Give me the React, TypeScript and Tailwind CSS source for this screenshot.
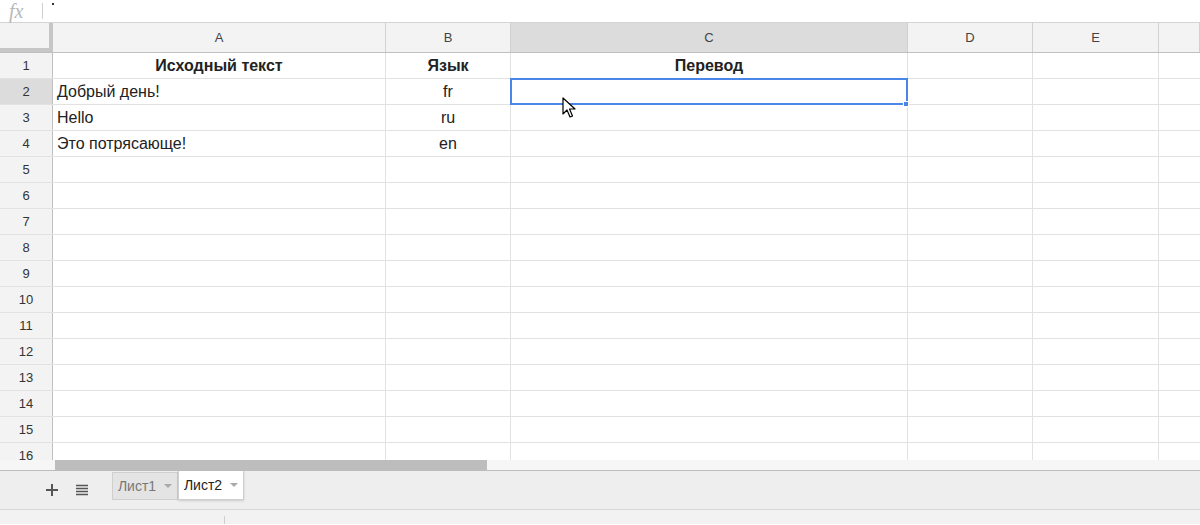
import React from "react";

const cols = [
  { name: "A", w: "w-[333px]" },
  { name: "B", w: "w-[125px]" },
  { name: "C", w: "w-[397px]" },
  { name: "D", w: "w-[125px]" },
  { name: "E", w: "w-[126px]" },
  { name: "", w: "flex-1" },
];

const data: Record<number, { a?: string; b?: string; c?: string; bold?: boolean }> = {
  1: { a: "Исходный текст", b: "Язык", c: "Перевод", bold: true },
  2: { a: "Добрый день!", b: "fr" },
  3: { a: "Hello", b: "ru" },
  4: { a: "Это потрясающе!", b: "en" },
};

const rows = Array.from({ length: 16 }, (_, i) => i + 1);

function Cursor() {
  return (
    <svg width="14" height="22" viewBox="0 0 14 22" className="absolute left-[562px] top-[97px]">
      <path
        d="M1 1 L1 17 L5 13 L8 20 L10.5 19 L7.5 12 L13 12 Z"
        fill="#fff"
        stroke="#000"
        strokeWidth="1.2"
        strokeLinejoin="round"
      />
    </svg>
  );
}

export default function App() {
  return (
    <div className="relative w-[1200px] h-[525px] overflow-hidden bg-white font-['Liberation_Sans',Arial,sans-serif] text-[#222]">
      {/* Formula bar */}
      <div className="flex items-center h-[23px] border-b border-[#d4d4d4] bg-white">
        <span className="w-[42px] pl-[9px] font-['Liberation_Serif',serif] italic text-[20px] text-[#b8b8b8] leading-[22px]">
          fx
        </span>
        <span className="w-px h-[16px] bg-[#d0d0d0]" />
        <span className="ml-[9px] -mt-[14px] w-[2px] h-[2px] bg-[#333]" />
      </div>

      {/* Column headers */}
      <div className="flex h-[30px] border-b border-[#c0c0c0] bg-[#f3f3f3]">
        <div className="w-[53px] shrink-0 border-r-4 border-b-4 border-[#c6c6c6] bg-[#f3f3f3]" />
        {cols.map((c, i) => (
          <div
            key={i}
            className={`${c.w} shrink-0 flex items-center justify-center border-r border-[#d0d0d0] text-[13px] text-[#444] ${
              c.name === "C" ? "bg-[#dcdcdc]" : ""
            }`}
          >
            {c.name}
          </div>
        ))}
      </div>

      {/* Grid */}
      <div className="h-[407px] overflow-hidden">
        {rows.map((r) => {
          const d = data[r] || {};
          return (
            <div key={r} className="flex h-[26px] border-b border-[#e2e2e2]">
              <div
                className={`w-[53px] shrink-0 flex items-center justify-center border-r border-[#c0c0c0] text-[13px] text-[#333] ${
                  r === 2 ? "bg-[#dcdcdc]" : "bg-[#f3f3f3]"
                }`}
              >
                {r}
              </div>
              <div
                className={`w-[333px] shrink-0 flex items-center border-r border-[#e2e2e2] text-[16px] ${
                  d.bold ? "justify-center font-bold" : "pl-[4px]"
                }`}
              >
                {d.a}
              </div>
              <div
                className={`w-[125px] shrink-0 flex items-center justify-center border-r border-[#e2e2e2] text-[16px] ${
                  d.bold ? "font-bold" : ""
                }`}
              >
                {d.b}
              </div>
              <div className="w-[397px] shrink-0 flex items-center justify-center border-r border-[#e2e2e2] text-[16px] font-bold">
                {d.c}
              </div>
              <div className="w-[125px] shrink-0 border-r border-[#e2e2e2]" />
              <div className="w-[126px] shrink-0 border-r border-[#e2e2e2]" />
              <div className="flex-1" />
            </div>
          );
        })}
      </div>

      {/* Horizontal scrollbar */}
      <div className="flex items-center h-[11px] bg-[#f6f6f6] pl-[55px] border-b border-[#bdbdbd]">
        <div className="w-[432px] h-[10px] bg-[#bdbdbd]" />
      </div>

      {/* Sheet tabs */}
      <div className="flex items-start h-[39px] bg-[#eeeeee] border-b border-[#d6d6d6]">
        <div className="w-[112px] h-full flex items-center pl-[45px] gap-[16px] text-[#555]">
          <svg width="14" height="14" viewBox="0 0 14 14">
            <path d="M7 1 V13 M1 7 H13" stroke="#555" strokeWidth="2" />
          </svg>
          <svg width="14" height="12" viewBox="0 0 14 12">
            <path d="M1 1.5 H13 M1 4.5 H13 M1 7.5 H13 M1 10.5 H13" stroke="#555" strokeWidth="1.6" />
          </svg>
        </div>
        <div className="mt-[1px] h-[28px] w-[66px] flex items-center justify-center gap-[8px] bg-[#e4e4e4] border border-[#cfcfcf] text-[14px] text-[#777]">
          Лист1
          <span className="w-0 h-0 border-l-[4px] border-r-[4px] border-t-[4px] border-l-transparent border-r-transparent border-t-[#aaa]" />
        </div>
        <div className="h-[29px] w-[66px] flex items-center justify-center gap-[8px] bg-white border border-t-0 border-[#cfcfcf] shadow-[0_1px_2px_rgba(0,0,0,0.15)] text-[14px] text-[#222]">
          Лист2
          <span className="w-0 h-0 border-l-[4px] border-r-[4px] border-t-[4px] border-l-transparent border-r-transparent border-t-[#aaa]" />
        </div>
      </div>

      {/* Status bar */}
      <div className="flex h-[14px] bg-[#f2f2f2]">
        <div className="w-[225px] border-r border-[#cfcfcf] mt-[6px]" />
      </div>

      {/* Selection */}
      <div className="absolute left-[510px] top-[78px] w-[398px] h-[27px] border-2 border-[#4a86e8]" />
      <div className="absolute left-[903px] top-[101px] w-[6px] h-[6px] bg-[#4a86e8] border border-white" />
      <Cursor />
    </div>
  );
}
